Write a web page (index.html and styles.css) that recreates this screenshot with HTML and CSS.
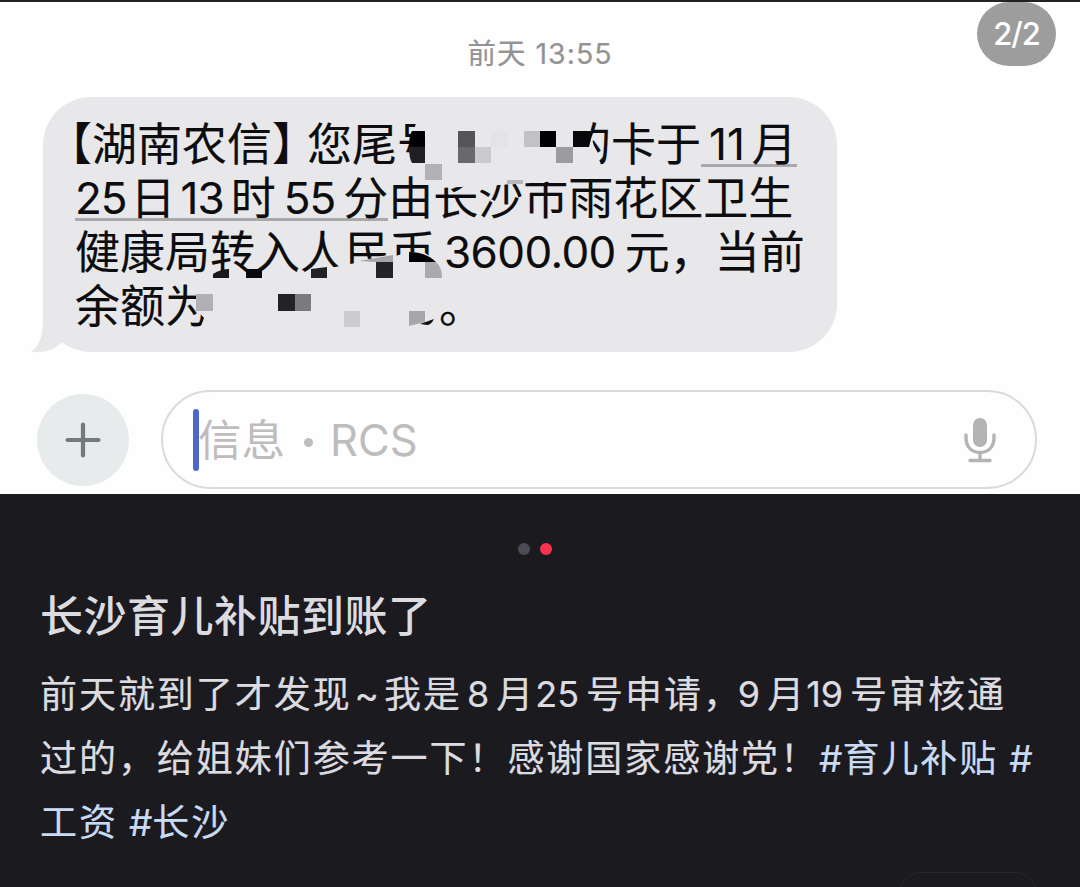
FILE: index.html
```html
<!DOCTYPE html>
<html lang="zh-CN">
<head>
  <meta charset="UTF-8" />
  <title>长沙育儿补贴到账了</title>
  <link rel="stylesheet" href="styles.css">
</head>
<body>

  <!-- 短信截图 -->
  <div class="photo">
    <div class="page-badge">2/2</div>
    <p class="sms-time">前天 13:55</p>

    <div class="bubble">
      <svg class="bubble-tail" width="50" height="46" viewBox="0 0 50 46">
        <path d="M12 0V12C12 28 9 38 0 45C12 46 23 43 29 37L38 30V0Z" fill="#e8e8ea" />
      </svg>
      <div class="sms-line line-first">【湖南农信<span class="bracket">】</span>您尾号<span class="hidden-card"></span>的卡于<span class="date"><span class="num month">11</span>月</span></div>
      <div class="sms-line"><span class="date"><span class="num day">25</span>日<span class="num hour">13</span>时<span class="num minute">55</span>分</span>由长沙市雨花区卫生</div>
      <div class="sms-line">健康局转入人民币<span class="num amount">3600.00</span>元，当前</div>
      <div class="sms-line">余额为<span class="hidden-balance"></span>。</div>

      <!-- 马赛克 -->
      <svg class="mosaic" width="794" height="255" viewBox="43 97 794 255">
        <g fill="#e8e8ea">
          <path d="M417 120H590L591 136L594 146L598 154L601 165L590 176H568L560 181L500 185L440 188L428 176L412 161L409 146Z" />
          <path d="M203 278L232 271L262 273L310 272L350 264L392 257L409 252L425 253L437 261L443 280L438 300V319L428 326H201L204 318L196 309V290Z" />
          <path d="M355 262L392 254V270H355Z" />
        </g>
        <path d="M599 161L604 156L602 162Z" fill="#111" />
        <g shape-rendering="crispEdges">
          <rect x="458" y="131" width="17" height="16" fill="#555557" />
          <rect x="458" y="147" width="17" height="16" fill="#69696b" />
          <rect x="475" y="147" width="16" height="16" fill="#cbcbcd" />
          <rect x="491" y="131" width="17" height="16" fill="#e4e4e6" />
          <rect x="524" y="131" width="16" height="16" fill="#c2c2c4" />
          <rect x="540" y="131" width="16" height="16" fill="#000002" />
          <rect x="556" y="147" width="17" height="16" fill="#9c9c9e" />
          <rect x="425" y="164" width="17" height="16" fill="#b2b2b4" />
          <rect x="507" y="180" width="16" height="4" fill="#b8b8ba" />
          <rect x="196" y="294" width="17" height="17" fill="#b1b1b3" />
          <rect x="278" y="294" width="17" height="17" fill="#232325" />
          <rect x="295" y="294" width="16" height="17" fill="#7b7b7d" />
          <rect x="344" y="311" width="16" height="16" fill="#cdcdcf" />
          <rect x="376" y="262" width="17" height="16" fill="#242426" />
        </g>
        <path d="M412 131H425V147H409Q409 135 412 131Z" fill="#010103" />
        <path d="M409 147H425V163H412Q409 158 409 147Z" fill="#202022" />
        <path d="M573 131H593L589 147H573Z" fill="#09090b" />
        <path d="M213 274Q221 269 229 269V278H213Z" fill="#19191b" />
        <path d="M246 269H262V278H246Z" fill="#09090b" />
        <path d="M311 269L327 267V278H311Z" fill="#222224" />
        <path d="M359 261L393 255V262H376Z" fill="#a5a5a7" />
        <path d="M409 252Q426 252 436 262H409Z" fill="#010103" />
        <path d="M425 262H436Q442 267 442 278H425Z" fill="#aaaaac" />
        <path d="M409 311H425V322L409 326Z" fill="#a7a7a9" />
        <path d="M420 324L434 319Q431 325 427 325Z" fill="#111" />
      </svg>
    </div>

    <div class="composer">
      <div class="add-button">
        <svg width="36" height="36" viewBox="0 0 36 36">
          <path d="M18 2.5V33.5M2.5 18H33.5" stroke="#737b7a" stroke-width="4.2" stroke-linecap="round" />
        </svg>
      </div>
      <div class="message-box">
        <span class="caret"></span>
        <span class="placeholder">信息<i class="dot"></i>RCS</span>
        <svg class="mic" width="32" height="46" viewBox="0 0 32 46">
          <rect x="9" y="1" width="14" height="29" rx="7" fill="#b4b4b6" />
          <path d="M2 18V21C2 30 8 35.500 16 35.500S30 30 30 21V18" fill="none" stroke="#b4b4b6" stroke-width="3.4" stroke-linecap="round" />
          <path d="M16 36V43M6 43.500H26" fill="none" stroke="#b4b4b6" stroke-width="3.4" stroke-linecap="round" />
        </svg>
      </div>
    </div>
  </div>

  <!-- 正文 -->
  <div class="post">
    <div class="pager">
      <span></span>
      <span class="active"></span>
    </div>
    <h1>长沙育儿补贴到账了</h1>
    <div class="post-text">
      <p>前天就到了才发现<span class="tilde">~</span>我是<span class="num first">8</span>月<span class="num">25</span>号申请，<span class="num nine">9</span>月<span class="num">19</span>号审核通</p>
      <p>过的，给姐妹们参考一下！感谢国家感谢党！<span class="tag"><b>#</b>育儿补贴</span><span class="tag next"><b>#</b></span></p>
      <p><span class="tag">工资</span><span class="tag next"><b>#</b>长沙</span></p>
    </div>
    <div class="post-action"></div>
  </div>

</body>
</html>
```
FILE: styles.css
```css
* {
  margin: 0;
  padding: 0;
  box-sizing: border-box;
}
body {
  width: 1080px;
  height: 887px;
  overflow: hidden;
  background-color: #1b1a1f;
  font-family: "Inter", "Noto Sans CJK SC", sans-serif;
}
/* 短信截图 */
.photo {
  position: relative;
  height: 494px;
  padding-top: 33px;
  background-color: #fefefe;
  border-top: 2px solid #242125;
}
.page-badge {
  position: absolute;
  top: 0;
  left: 977px;
  width: 79px;
  height: 64px;
  border-radius: 32px;
  background-color: #9d9d9d;
  color: #fff;
  font-size: 31px;
  font-weight: 500;
  line-height: 64px;
  letter-spacing: -1px;
  text-align: center;
}
.sms-time {
  height: 38px;
  line-height: 38px;
  text-align: center;
  font-size: 28.5px;
  letter-spacing: 1px;
  color: #939395;
  -webkit-text-stroke: 0.2px;
}
.bubble {
  position: relative;
  width: 794px;
  height: 255px;
  margin: 24px 0 0 43px;
  padding: 21px 0 0 32px;
  border-radius: 48px;
  background-color: #e8e8ea;
}
.bubble-tail {
  position: absolute;
  left: -12px;
  bottom: -1px;
}
.mosaic {
  position: absolute;
  left: 0;
  top: 0;
}
.sms-line {
  display: flex;
  height: 54px;
  line-height: 54px;
  font-size: 45px;
  white-space: nowrap;
  color: #0d0d0f;
  -webkit-text-stroke: 0.15px;
}
.line-first {
  margin-left: -28px;
}
.bracket {
  letter-spacing: -10px;
}
.sms-line .num {
  line-height: 52px;
  font-size: 44px;
  letter-spacing: -1px;
}
.sms-line .month {
  margin: 0 7px 0 8px;
  letter-spacing: 0;
}
.sms-line .day {
  margin-right: 4px;
}
.sms-line .hour {
  margin: 0 7px 0 5px;
}
.sms-line .minute {
  margin: 0 8px;
}
.sms-line .amount {
  margin: 0 9px;
  letter-spacing: -0.6px;
}
.date {
  display: flex;
  height: 49px;
  border-bottom: 3px solid #a9a9ab;
}
.hidden-card {
  width: 124px;
}
.hidden-balance {
  width: 229px;
}
/* 输入栏 */
.composer {
  display: flex;
  align-items: center;
  gap: 32px;
  margin: 38px 0 0 37px;
}
.add-button {
  display: flex;
  align-items: center;
  justify-content: center;
  width: 92px;
  height: 92px;
  border-radius: 50%;
  background-color: #e7ebeb;
}
.message-box {
  display: flex;
  align-items: center;
  width: 876px;
  height: 99px;
  padding: 0 39px 0 30px;
  border: 2px solid #dadada;
  border-radius: 50px;
}
.caret {
  width: 6px;
  height: 62px;
  border-radius: 3px;
  background-color: #4e68c8;
}
.placeholder {
  display: flex;
  align-items: center;
  margin-left: -1px;
  font-size: 43.5px;
  line-height: 60px;
  color: #bfbcbe;
}
.dot {
  width: 9px;
  height: 9px;
  margin: 6px 17px 0 19px;
  border-radius: 50%;
  background-color: #bfbcbe;
}
.mic {
  margin-left: auto;
}
/* 正文 */
.post {
  height: 393px;
  padding: 49px 39px 0 40px;
  color: #dcdce0;
}
.pager {
  display: flex;
  justify-content: center;
  gap: 10px;
  margin-right: 11px;
}
.pager span {
  width: 12px;
  height: 12px;
  border-radius: 50%;
  background-color: #4a4b53;
}
.pager .active {
  background-color: #fb3150;
}
h1 {
  height: 64px;
  margin-top: 29px;
  line-height: 64px;
  font-size: 43px;
  font-weight: 500;
  letter-spacing: 0.5px;
}
.post-text {
  margin-top: 15px;
}
.post-text p {
  display: flex;
  height: 64px;
  line-height: 64px;
  font-size: 37px;
  letter-spacing: 1.95px;
  white-space: nowrap;
  -webkit-text-stroke: 0.2px;
}
.post-text .num {
  margin-right: 7px;
  font-size: 36px;
  line-height: 62px;
  letter-spacing: 0;
}
.post-text .first {
  margin-left: 5px;
}
.post-text .nine {
  margin-left: -4px;
}
.tilde {
  margin: 0 3px;
}
.tag {
  color: #c9daf3;
}
.tag b {
  font-weight: 400;
  letter-spacing: 0;
}
.next {
  margin-left: 11px;
}
.post-action {
  width: 136px;
  height: 40px;
  margin: 17px 0 0 860px;
  border: 1px solid #28272c;
  border-radius: 20px;
}
```
